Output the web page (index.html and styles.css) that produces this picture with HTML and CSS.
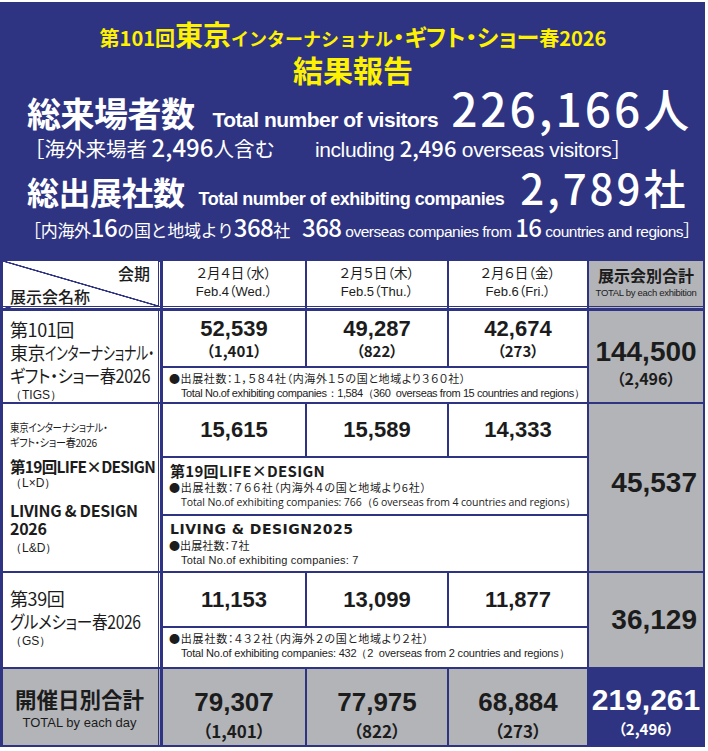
FILE: index.html
```html
<!DOCTYPE html>
<html lang="ja">
<head>
<meta charset="utf-8">
<title>結果報告</title>
<link rel="stylesheet" href="styles.css">
</head>
<body>
<div class="sheet">
  <header class="hero">
    <div class="t1"><span class="t1s">第101回</span><span class="t1l">東京</span><span class="t1m">インターナショナル</span><span class="t1k">・ギフト・ショー</span><span class="t1s">春2026</span></div>
    <div class="t2">結果報告</div>
    <div class="stat"><span class="stat-jp">総来場者数</span><span class="stat-en">Total number of visitors</span><span class="stat-big">226,166人</span></div>
    <div class="sub">［海外来場者 <span class="sub-num">2,496</span>人含む<span class="sub-en">including <span class="sub-num">2,496</span> overseas visitors</span>］</div>
    <div class="stat stat2"><span class="stat-jp">総出展社数</span><span class="stat-en">Total number of exhibiting companies</span><span class="stat-big">2,789社</span></div>
    <div class="sub sub2">［内海外<span class="sub-num2">16</span>の国と地域より<span class="sub-num2">368</span>社<span class="sub-en"><span class="sub-num2">368</span> overseas companies from <span class="sub-num2">16</span> countries and regions</span>］</div>
  </header>

  <div class="table">
    <div class="cell corner head"><span class="corner-top">会期</span><span class="corner-bot">展示会名称</span></div>
    <div class="cell day head"><span>２月４日（水）</span><span class="day-en">Feb.4（Wed.）</span></div>
    <div class="cell day head"><span>２月５日（木）</span><span class="day-en">Feb.5（Thu.）</span></div>
    <div class="cell day head"><span>２月６日（金）</span><span class="day-en">Feb.6（Fri.）</span></div>
    <div class="cell gray head tot-head"><span class="tot-head-jp">展示会別合計</span><span class="tot-head-en">TOTAL by each exhibition</span></div>

    <div class="cell label r1">
      <span class="lab">第101回</span>
      <span class="lab">東京<span class="kana">インターナショナル・</span></span>
      <span class="lab sq90">ギフト・ショー春2026</span>
      <span class="lab-abbr">（TIGS）</span>
    </div>
    <div class="cell num"><span class="n">52,539</span><span class="nsub">（1,401）</span></div>
    <div class="cell num"><span class="n">49,287</span><span class="nsub">（822）</span></div>
    <div class="cell num"><span class="n">42,674</span><span class="nsub">（273）</span></div>
    <div class="cell gray total r1t"><span class="tn">144,500</span><span class="tsub">（2,496）</span></div>
    <div class="cell note">
      <span class="note-jp note-jp-tight">●出展社数：１，５８４社（内海外１５の国と地域より３６０社）</span>
      <span class="note-en">Total No.of exhibiting companies：1,584（360&nbsp; overseas from 15 countries and regions）</span>
    </div>

    <div class="cell label r2">
      <span class="lab-small sq86">東京インターナショナル・</span>
      <span class="lab-small sq92">ギフト・ショー春2026</span>
      <span class="lab-bold lab-gap">第19回LIFE×DESIGN</span>
      <span class="lab-abbr">（L×D）</span>
      <span class="lab-bold lab-gap2">LIVING &amp; DESIGN</span>
      <span class="lab-bold">2026</span>
      <span class="lab-abbr lab-gap3">（L&amp;D）</span>
    </div>
    <div class="cell num"><span class="n">15,615</span></div>
    <div class="cell num"><span class="n">15,589</span></div>
    <div class="cell num"><span class="n">14,333</span></div>
    <div class="cell gray total r2t"><span class="tn">45,537</span></div>
    <div class="cell note sub-show">
      <span class="show-title">第19回LIFE×DESIGN</span>
      <span class="note-jp note-jp-wide">●出展社数：７６６社（内海外４の国と地域より6社）</span>
      <span class="note-en2">Total No.of exhibiting companies: 766（6 overseas from 4 countries and regions）</span>
    </div>
    <div class="cell note sub-show">
      <span class="show-title show-title-wide">LIVING &amp; DESIGN2025</span>
      <span class="note-jp">●出展社数：７社</span>
      <span class="note-en note-en-loose">Total No.of exhibiting companies: 7</span>
    </div>

    <div class="cell label r3">
      <span class="lab">第39回</span>
      <span class="lab sq87">グルメショー春2026</span>
      <span class="lab-abbr">（GS）</span>
    </div>
    <div class="cell num"><span class="n">11,153</span></div>
    <div class="cell num"><span class="n">13,099</span></div>
    <div class="cell num"><span class="n">11,877</span></div>
    <div class="cell gray total r3t"><span class="tn">36,129</span></div>
    <div class="cell note">
      <span class="note-jp note-jp-wide">●出展社数：４３２社（内海外２の国と地域より２社）</span>
      <span class="note-en note-en-mid">Total No.of exhibiting companies: 432（2&nbsp; overseas from 2 countries and regions）</span>
    </div>

    <div class="cell gray label-total"><span class="lt-jp">開催日別合計</span><span class="lt-en">TOTAL by each day</span></div>
    <div class="cell gray day-total"><span class="dn">79,307</span><span class="dsub">（1,401）</span></div>
    <div class="cell gray day-total"><span class="dn">77,975</span><span class="dsub">（822）</span></div>
    <div class="cell gray day-total"><span class="dn">68,884</span><span class="dsub">（273）</span></div>
    <div class="cell grand"><span class="gn">219,261</span><span class="gsub">（2,496）</span></div>
  </div>
</div>
</body>
</html>
```

FILE: styles.css
```css
* { box-sizing: border-box; }
html, body { margin: 0; padding: 0; background: #fff; }
body { font-family: "Noto Sans CJK JP", "Liberation Sans", sans-serif; color: #1c1c1c; }

.sheet {
  width: 705px;
  margin-top: 2px;
  background: #2e3481;
  padding: 0 2px 2px 3px;
}

/* ---------- hero ---------- */
.hero { height: 259px; padding-top: 18px; color: #fff; }
.t1 {
  text-align: center; color: #fff200; font-weight: 700;
  line-height: 28px; height: 33px; white-space: nowrap;
}
.t1s { font-size: 20px; }
.t1l { font-size: 28px; }
.t1m { font-size: 18px; }
.t1k { font-size: 23px; font-feature-settings: "palt"; }
.t2 {
  text-align: center; color: #fff200; font-weight: 700;
  font-size: 30px; line-height: 32px; height: 32px;
}
.stat {
  display: flex; align-items: baseline; white-space: nowrap;
  padding-left: 24px; height: 48px; line-height: 44px;
}
.stat-jp { font-size: 34px; font-weight: 700; letter-spacing: -0.5px; }
.stat-en {
  font-family: "Liberation Sans", sans-serif; font-weight: 700;
  font-size: 21px; margin-left: 18px; letter-spacing: -0.5px;
}
.stat-big {
  font-size: 46px; font-weight: 500; margin-left: 13px; letter-spacing: 3px;
}
.sub {
  padding-left: 21px; font-size: 20.5px; line-height: 28px; height: 30px;
  white-space: nowrap; letter-spacing: 0;
}
.sub-num { font-size: 24px; font-weight: 500; }
.sub-en { margin-left: 40px; font-family: "Liberation Sans", sans-serif; font-size: 21px; letter-spacing: -0.4px; }
.sub-en .sub-num { font-family: "Noto Sans CJK JP", sans-serif; font-size: 22px; letter-spacing: 0; }
.stat2 { margin-top: 2px; }
.stat2 .stat-jp { font-size: 32px; }
.stat2 .stat-en { font-size: 18px; margin-left: 14px; }
.stat2 .stat-big { font-size: 42px; margin-left: 16px; }
.sub2 { font-size: 17px; letter-spacing: -0.3px; }
.sub2 .sub-en { font-size: 15.5px; letter-spacing: -0.5px; margin-left: 12px; }
.sub-num2 { font-size: 24px; font-weight: 500; font-family: "Noto Sans CJK JP", sans-serif; letter-spacing: -0.5px; }

/* ---------- table ---------- */
.table {
  display: grid;
  grid-template-columns: 158px 142px 140px 138px 114px;
  grid-template-rows: 48px 55px 34px 52px 56px 55px 53px 39px 76px;
  gap: 2px;
}
.cell { background: #fff; display: flex; flex-direction: column; }
.gray { background: #b3b4b8; }
.head { border-bottom: 3px double #2e3481; }

.corner {
  grid-column: 1; grid-row: 1;
  border-right: 3px double #2e3481;
  background: linear-gradient(to top right, #fff calc(50% - 1px), #2e3481 calc(50% - 0.5px), #2e3481 calc(50% + 0.5px), #fff calc(50% + 1px));
  font-size: 16px; font-weight: 500; padding: 2px 8px 0 7px; line-height: 20px;
}
.corner-top { align-self: flex-end; }
.corner-bot { margin-top: 3px; }

.day { align-items: center; justify-content: center; font-size: 13.5px; line-height: 20px; padding-bottom: 3px; font-feature-settings: "palt"; }
.day-en { font-family: "Liberation Sans", "Noto Sans CJK JP", sans-serif; font-size: 13px; }
.tot-head { align-items: center; justify-content: center; padding-bottom: 4px; }
.tot-head-jp { font-size: 16px; font-weight: 700; line-height: 22px; }
.tot-head-en { font-family: "Liberation Sans", sans-serif; font-size: 9.5px; line-height: 14px; letter-spacing: -0.3px; }

.label { grid-column: 1; border-right: 3px double #2e3481; padding: 7px 0 0 7px; white-space: nowrap; }
.r1 { grid-row: 2 / 4; }
.r2 { grid-row: 4 / 7; padding-top: 16px; }
.r3 { grid-row: 7 / 9; padding-top: 14px; }
.lab { font-size: 18px; line-height: 23px; font-feature-settings: "palt"; letter-spacing: -0.4px; transform-origin: left center; }
.kana { display: inline-block; transform: scaleX(0.72); transform-origin: left center; }
.sq90 { transform: scaleX(0.9); }
.sq87 { transform: scaleX(0.87); }
.sq86 { transform: scaleX(0.86); }
.sq92 { transform: scaleX(0.92); }
.lab-abbr { font-size: 12px; line-height: 17px; font-family: "Liberation Sans", sans-serif; }
.lab-small { font-size: 11px; line-height: 15px; font-feature-settings: "palt"; letter-spacing: -0.3px; transform-origin: left center; }
.lab-bold { font-size: 16px; line-height: 18px; font-weight: 700; letter-spacing: -0.3px; }
.label .lab-bold.lab-gap { margin-top: 7px; font-size: 15.5px; letter-spacing: -0.7px; }
.lab-gap2 { margin-top: 9px; }
.lab-gap3 { margin-top: 3px; }

.num { align-items: center; justify-content: center; font-family: "Liberation Sans", sans-serif; font-weight: 700; }
.n { font-size: 22px; line-height: 24px; }
.nsub { font-size: 15px; line-height: 20px; font-family: "Noto Sans CJK JP", sans-serif; font-weight: 700; }
.nsub, .tsub, .dsub, .gsub { font-feature-settings: "palt"; }

.note {
  grid-column: 2 / 5; padding: 3px 0 0 6px; font-size: 11px; line-height: 15px; white-space: nowrap;
}
.note-jp { font-size: 11px; letter-spacing: 0.1px; font-feature-settings: "palt"; }
.note-jp-tight { letter-spacing: 0.6px; }
.note-jp-wide { letter-spacing: 0.8px; }
.note-en { font-family: "Liberation Sans", sans-serif; font-size: 11px; letter-spacing: -0.4px; padding-left: 12px; }
.note-en-mid { letter-spacing: -0.2px; }
.note-en-loose { letter-spacing: 0.2px; }
.note-en2 { font-family: "Open Sans", sans-serif; font-size: 10.5px; letter-spacing: -0.1px; padding-left: 12px; }
.sub-show { padding-top: 4px; }
.show-title { font-size: 15px; font-weight: 700; line-height: 18px; padding-left: 1px; letter-spacing: 0.3px; }
.show-title-wide { letter-spacing: 0.5px; font-family: "DejaVu Sans", sans-serif; font-size: 14px; }

.total { grid-column: 5; align-items: center; justify-content: center; font-family: "Liberation Sans", sans-serif; font-weight: 700; }
.r1t { grid-row: 2 / 4; padding-top: 12px; }
.r2t { grid-row: 4 / 7; align-items: flex-end; padding-right: 6px; padding-bottom: 9px; }
.r3t { grid-row: 7 / 9; align-items: flex-end; padding-right: 6px; }
.tn { font-size: 28px; line-height: 30px; }
.tsub { font-size: 16px; line-height: 22px; font-family: "Noto Sans CJK JP", sans-serif; font-weight: 700; }

.label-total { grid-column: 1; border-right: 3px double #2e3481; align-items: center; justify-content: center; padding-top: 2px; padding-right: 2px; }
.lt-jp { font-size: 21.5px; font-weight: 700; line-height: 30px; }
.lt-en { font-family: "Liberation Sans", sans-serif; font-size: 13px; line-height: 18px; }
.day-total { align-items: center; padding-top: 18px; font-family: "Liberation Sans", sans-serif; font-weight: 700; }
.dn { font-size: 26px; line-height: 30px; }
.dsub { font-size: 17px; line-height: 22px; margin-top: 3px; font-family: "Noto Sans CJK JP", sans-serif; font-weight: 700; }
.grand { background: #2e3481; color: #fff; align-items: center; padding-top: 16px; font-family: "Liberation Sans", sans-serif; font-weight: 700; }
.gn { font-size: 30px; line-height: 30px; }
.gsub { font-size: 15px; line-height: 22px; margin-top: 3px; font-family: "Noto Sans CJK JP", sans-serif; font-weight: 700; }
```
